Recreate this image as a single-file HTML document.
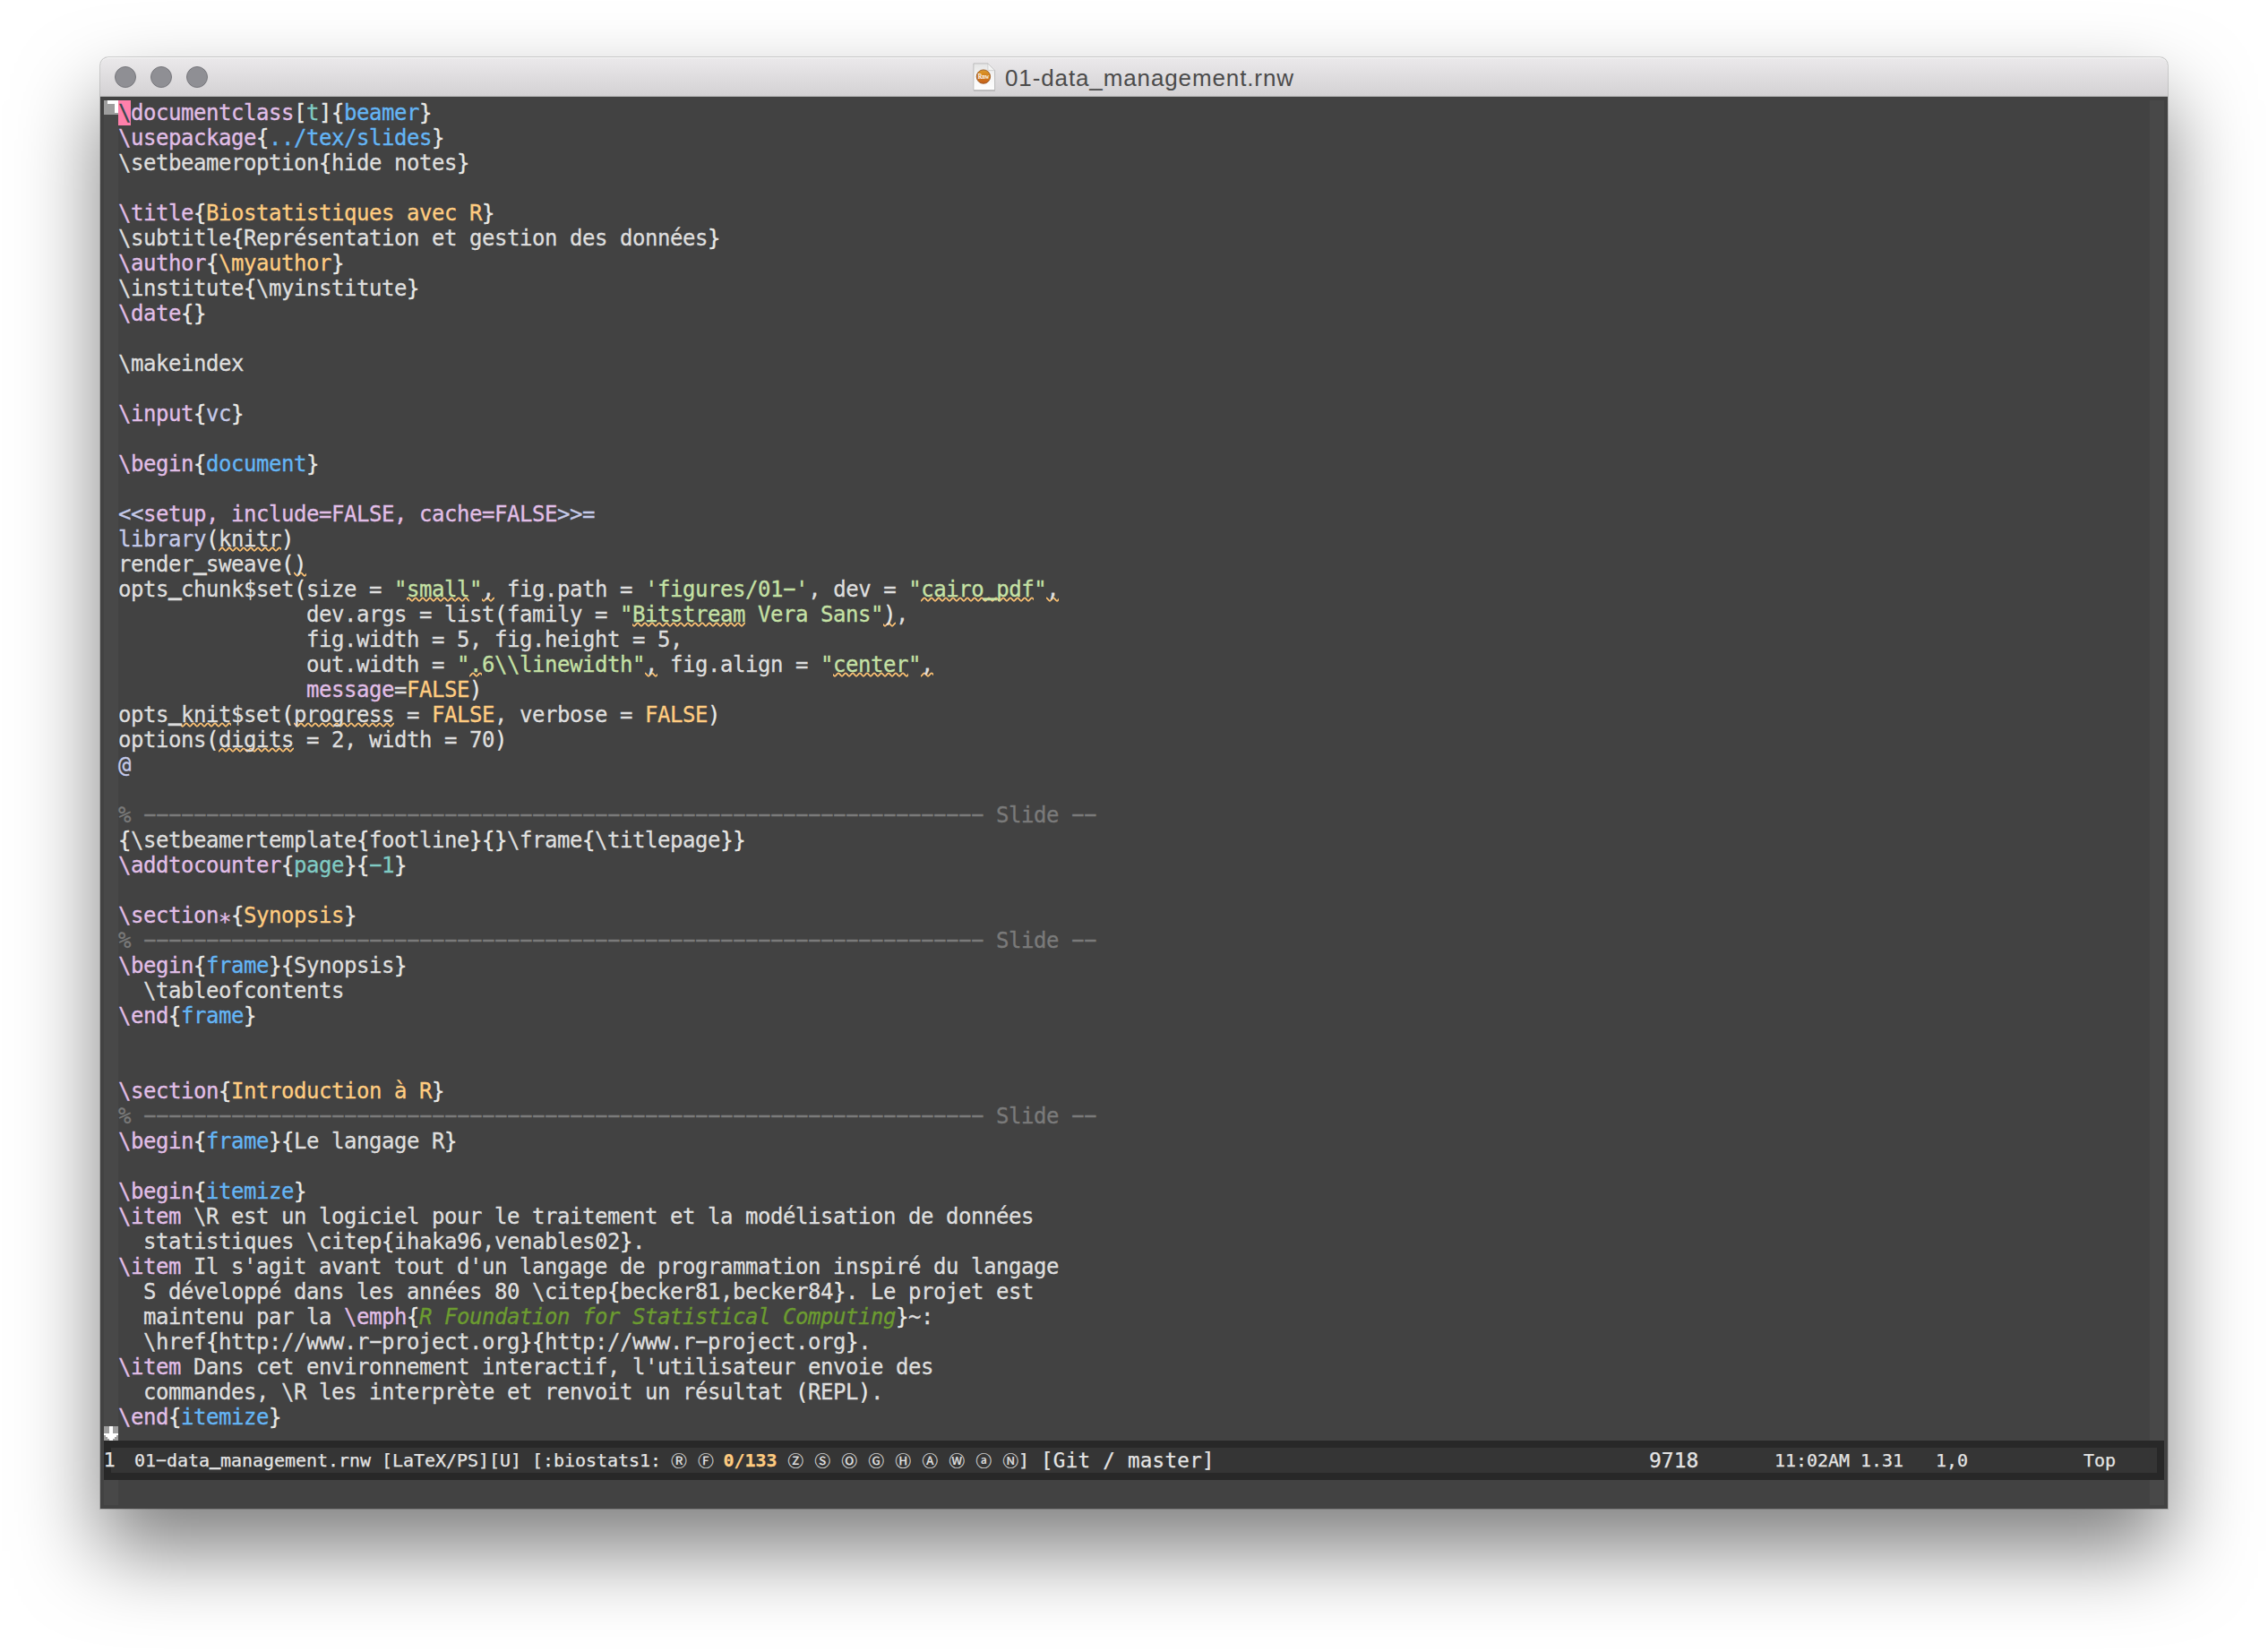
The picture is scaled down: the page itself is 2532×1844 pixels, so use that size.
<!DOCTYPE html>
<html lang="fr"><head><meta charset="utf-8"><title>01-data_management.rnw</title>
<style>
html,body{margin:0;padding:0}
body{width:2532px;height:1844px;background:#fff;position:relative;overflow:hidden;font-family:"DejaVu Sans Mono","Liberation Mono",monospace}
#win{position:absolute;left:112px;top:64px;width:2308px;height:1620px;border-radius:9px 9px 0 0;background:#424242;
 box-shadow:0 0 0 1px rgba(0,0,0,.16),0 47px 92px 0 rgba(0,0,0,.5)}
#tb{position:absolute;left:0;top:0;width:100%;height:44px;border-radius:9px 9px 0 0;
 background:linear-gradient(#ebe9eb,#d3d1d3);box-shadow:inset 0 1px 0 #f7f7f7, inset 0 -1px 0 #b9b9b9}
.tl{position:absolute;top:10px;width:22px;height:22px;border-radius:50%;background:#8f8f94;border:1px solid #77777c}
#title{position:absolute;left:1010px;top:8px;height:30px;font:26px/30px "Liberation Sans","DejaVu Sans",sans-serif;letter-spacing:0.88px;color:#4b4b4b;white-space:pre}
#ed{position:absolute;left:0;top:44px;width:2308px;height:1576px;background:#424242}
.fr{position:absolute;top:4px;width:16px;height:1568px;background:#484848}
#txt{position:absolute;left:20px;top:4px;width:2268px;font-size:24px;letter-spacing:-0.449px;color:#dedede;-webkit-text-stroke:0.3px}
.ln{height:28px;line-height:28px;white-space:pre}
.ln i{font-style:normal;display:inline-block;transform:scaleX(1.95);position:relative;top:-1px}
.k{color:#e1bee7}.d{color:#dedede}.b{color:#e9e9e6}.u{color:#64b5f6}.t{color:#80cbc4}.o{color:#ffcc80}
.s{color:#c5e1a5}.c{color:#7a7a7a}.l{color:#c5cae9}.e{color:#6c9c30;font-style:italic}
.cur{background:#ff80ab;color:#37474f}
#ml{position:absolute;left:4px;top:1500px;width:2300px;height:44px;background:#282828}
#mli{position:absolute;left:8px;top:8px;right:8px;height:28px;background:#353535}
.m{position:absolute;top:8px;height:28px;line-height:28px;font-size:20px;letter-spacing:-0.041px;color:#e4e4e4;white-space:pre;-webkit-text-stroke:0.25px}
.m i{font-style:normal;display:inline-block;transform:scaleX(1.95);position:relative;top:-1px}
.m.big{font-size:23px;letter-spacing:0}
.m.one{font-size:22px;letter-spacing:0}
.m.cc{font-family:"Noto Sans CJK JP","DejaVu Sans",sans-serif;font-size:17.5px;letter-spacing:0;width:30px;text-align:center;-webkit-text-stroke:0.2px}
.m b{color:#ffcc80}
.ln u,.m u{text-decoration:none;display:inline-block;position:relative;top:-1.9px;transform:scale(1.05,2.3);transform-origin:50% 27.2px}
.m u{top:-1.8px;transform-origin:50% 25.3px}
.ln em{font-style:normal;position:relative;top:7px}
.ln i,.ln u{width:14px}.m i,.m u{width:12px}
</style></head><body>
<div id="win">
<div id="tb"><div class="tl" style="left:16px"></div><div class="tl" style="left:56px"></div><div class="tl" style="left:96px"></div>
<svg id="ico" style="position:absolute;left:972px;top:4px" width="30" height="36" viewBox="0 0 30 36"><defs><linearGradient id="pg" x1="0" y1="0" x2="0" y2="1"><stop offset="0" stop-color="#e4e4e4"/><stop offset=".5" stop-color="#f6f6f6"/><stop offset="1" stop-color="#fefefe"/></linearGradient><linearGradient id="og" x1="0" y1="0" x2="0" y2="1"><stop offset="0" stop-color="#dc9a2e"/><stop offset=".5" stop-color="#d17c1a"/><stop offset="1" stop-color="#c65f1c"/></linearGradient></defs><path d="M3 3.5h16l8 8v21.5H3z" fill="#000" opacity=".12" transform="translate(0 1)"/><path d="M2.9 2.9h16l7.7 7.7v22H2.9z" fill="url(#pg)" stroke="#b3b3b3" stroke-width=".8"/><path d="M18.9 2.9v7.7h7.7z" fill="#f4f4f4" stroke="#bdbdbd" stroke-width=".6"/><circle cx="13.9" cy="17.6" r="7.7" fill="url(#og)" stroke="#8f4d16" stroke-width=".8"/><text x="14" y="20.1" font-family="Liberation Serif,serif" font-size="7.6" font-weight="bold" fill="#fff" text-anchor="middle" textLength="12.6" lengthAdjust="spacingAndGlyphs">Rnw</text></svg>
<div id="title">01-data_management.rnw</div></div>
<div id="ed">
<div class="fr" style="left:4px"></div><div class="fr" style="left:2288px"></div>
<svg style="position:absolute;left:-112px;top:-108px" width="2532" height="1844" viewBox="0 0 2532 1844"><g fill="none" stroke="#ffc373" stroke-width="1.8" stroke-linecap="round"><clipPath id="wc"><rect x="244" y="608.3" width="70" height="9"/><rect x="328" y="636.3" width="14" height="9"/><rect x="454" y="664.3" width="70" height="9"/><rect x="538" y="664.3" width="14" height="9"/><rect x="1028" y="664.3" width="126" height="9"/><rect x="1168" y="664.3" width="14" height="9"/><rect x="706" y="692.3" width="126" height="9"/><rect x="986" y="692.3" width="14" height="9"/><rect x="524" y="748.3" width="14" height="9"/><rect x="720" y="748.3" width="14" height="9"/><rect x="930" y="748.3" width="84" height="9"/><rect x="1028" y="748.3" width="14" height="9"/><rect x="202" y="804.3" width="56" height="9"/><rect x="328" y="804.3" width="112" height="9"/><rect x="244" y="832.3" width="84" height="9"/></clipPath><path clip-path="url(#wc)" d="M240 611.3C241.5 611.3 242.5 614.8 244 614.8C245.5 614.8 246.5 611.3 248 611.3C249.5 611.3 250.5 614.8 252 614.8C253.5 614.8 254.5 611.3 256 611.3C257.5 611.3 258.5 614.8 260 614.8C261.5 614.8 262.5 611.3 264 611.3C265.5 611.3 266.5 614.8 268 614.8C269.5 614.8 270.5 611.3 272 611.3C273.5 611.3 274.5 614.8 276 614.8C277.5 614.8 278.5 611.3 280 611.3C281.5 611.3 282.5 614.8 284 614.8C285.5 614.8 286.5 611.3 288 611.3C289.5 611.3 290.5 614.8 292 614.8C293.5 614.8 294.5 611.3 296 611.3C297.5 611.3 298.5 614.8 300 614.8C301.5 614.8 302.5 611.3 304 611.3C305.5 611.3 306.5 614.8 308 614.8C309.5 614.8 310.5 611.3 312 611.3C313.5 611.3 314.5 614.8 316 614.8 M328 639.3C329.5 639.3 330.5 642.8 332 642.8C333.5 642.8 334.5 639.3 336 639.3C337.5 639.3 338.5 642.8 340 642.8C341.5 642.8 342.5 639.3 344 639.3 M448 667.3C449.5 667.3 450.5 670.8 452 670.8C453.5 670.8 454.5 667.3 456 667.3C457.5 667.3 458.5 670.8 460 670.8C461.5 670.8 462.5 667.3 464 667.3C465.5 667.3 466.5 670.8 468 670.8C469.5 670.8 470.5 667.3 472 667.3C473.5 667.3 474.5 670.8 476 670.8C477.5 670.8 478.5 667.3 480 667.3C481.5 667.3 482.5 670.8 484 670.8C485.5 670.8 486.5 667.3 488 667.3C489.5 667.3 490.5 670.8 492 670.8C493.5 670.8 494.5 667.3 496 667.3C497.5 667.3 498.5 670.8 500 670.8C501.5 670.8 502.5 667.3 504 667.3C505.5 667.3 506.5 670.8 508 670.8C509.5 670.8 510.5 667.3 512 667.3C513.5 667.3 514.5 670.8 516 670.8C517.5 670.8 518.5 667.3 520 667.3C521.5 667.3 522.5 670.8 524 670.8 M536 667.3C537.5 667.3 538.5 670.8 540 670.8C541.5 670.8 542.5 667.3 544 667.3C545.5 667.3 546.5 670.8 548 670.8C549.5 670.8 550.5 667.3 552 667.3 M1024 667.3C1025.5 667.3 1026.5 670.8 1028 670.8C1029.5 670.8 1030.5 667.3 1032 667.3C1033.5 667.3 1034.5 670.8 1036 670.8C1037.5 670.8 1038.5 667.3 1040 667.3C1041.5 667.3 1042.5 670.8 1044 670.8C1045.5 670.8 1046.5 667.3 1048 667.3C1049.5 667.3 1050.5 670.8 1052 670.8C1053.5 670.8 1054.5 667.3 1056 667.3C1057.5 667.3 1058.5 670.8 1060 670.8C1061.5 670.8 1062.5 667.3 1064 667.3C1065.5 667.3 1066.5 670.8 1068 670.8C1069.5 670.8 1070.5 667.3 1072 667.3C1073.5 667.3 1074.5 670.8 1076 670.8C1077.5 670.8 1078.5 667.3 1080 667.3C1081.5 667.3 1082.5 670.8 1084 670.8C1085.5 670.8 1086.5 667.3 1088 667.3C1089.5 667.3 1090.5 670.8 1092 670.8C1093.5 670.8 1094.5 667.3 1096 667.3C1097.5 667.3 1098.5 670.8 1100 670.8C1101.5 670.8 1102.5 667.3 1104 667.3C1105.5 667.3 1106.5 670.8 1108 670.8C1109.5 670.8 1110.5 667.3 1112 667.3C1113.5 667.3 1114.5 670.8 1116 670.8C1117.5 670.8 1118.5 667.3 1120 667.3C1121.5 667.3 1122.5 670.8 1124 670.8C1125.5 670.8 1126.5 667.3 1128 667.3C1129.5 667.3 1130.5 670.8 1132 670.8C1133.5 670.8 1134.5 667.3 1136 667.3C1137.5 667.3 1138.5 670.8 1140 670.8C1141.5 670.8 1142.5 667.3 1144 667.3C1145.5 667.3 1146.5 670.8 1148 670.8C1149.5 670.8 1150.5 667.3 1152 667.3C1153.5 667.3 1154.5 670.8 1156 670.8 M1168 667.3C1169.5 667.3 1170.5 670.8 1172 670.8C1173.5 670.8 1174.5 667.3 1176 667.3C1177.5 667.3 1178.5 670.8 1180 670.8C1181.5 670.8 1182.5 667.3 1184 667.3 M704 695.3C705.5 695.3 706.5 698.8 708 698.8C709.5 698.8 710.5 695.3 712 695.3C713.5 695.3 714.5 698.8 716 698.8C717.5 698.8 718.5 695.3 720 695.3C721.5 695.3 722.5 698.8 724 698.8C725.5 698.8 726.5 695.3 728 695.3C729.5 695.3 730.5 698.8 732 698.8C733.5 698.8 734.5 695.3 736 695.3C737.5 695.3 738.5 698.8 740 698.8C741.5 698.8 742.5 695.3 744 695.3C745.5 695.3 746.5 698.8 748 698.8C749.5 698.8 750.5 695.3 752 695.3C753.5 695.3 754.5 698.8 756 698.8C757.5 698.8 758.5 695.3 760 695.3C761.5 695.3 762.5 698.8 764 698.8C765.5 698.8 766.5 695.3 768 695.3C769.5 695.3 770.5 698.8 772 698.8C773.5 698.8 774.5 695.3 776 695.3C777.5 695.3 778.5 698.8 780 698.8C781.5 698.8 782.5 695.3 784 695.3C785.5 695.3 786.5 698.8 788 698.8C789.5 698.8 790.5 695.3 792 695.3C793.5 695.3 794.5 698.8 796 698.8C797.5 698.8 798.5 695.3 800 695.3C801.5 695.3 802.5 698.8 804 698.8C805.5 698.8 806.5 695.3 808 695.3C809.5 695.3 810.5 698.8 812 698.8C813.5 698.8 814.5 695.3 816 695.3C817.5 695.3 818.5 698.8 820 698.8C821.5 698.8 822.5 695.3 824 695.3C825.5 695.3 826.5 698.8 828 698.8C829.5 698.8 830.5 695.3 832 695.3 M984 695.3C985.5 695.3 986.5 698.8 988 698.8C989.5 698.8 990.5 695.3 992 695.3C993.5 695.3 994.5 698.8 996 698.8C997.5 698.8 998.5 695.3 1000 695.3 M520 751.3C521.5 751.3 522.5 754.8 524 754.8C525.5 754.8 526.5 751.3 528 751.3C529.5 751.3 530.5 754.8 532 754.8C533.5 754.8 534.5 751.3 536 751.3C537.5 751.3 538.5 754.8 540 754.8 M720 751.3C721.5 751.3 722.5 754.8 724 754.8C725.5 754.8 726.5 751.3 728 751.3C729.5 751.3 730.5 754.8 732 754.8C733.5 754.8 734.5 751.3 736 751.3 M928 751.3C929.5 751.3 930.5 754.8 932 754.8C933.5 754.8 934.5 751.3 936 751.3C937.5 751.3 938.5 754.8 940 754.8C941.5 754.8 942.5 751.3 944 751.3C945.5 751.3 946.5 754.8 948 754.8C949.5 754.8 950.5 751.3 952 751.3C953.5 751.3 954.5 754.8 956 754.8C957.5 754.8 958.5 751.3 960 751.3C961.5 751.3 962.5 754.8 964 754.8C965.5 754.8 966.5 751.3 968 751.3C969.5 751.3 970.5 754.8 972 754.8C973.5 754.8 974.5 751.3 976 751.3C977.5 751.3 978.5 754.8 980 754.8C981.5 754.8 982.5 751.3 984 751.3C985.5 751.3 986.5 754.8 988 754.8C989.5 754.8 990.5 751.3 992 751.3C993.5 751.3 994.5 754.8 996 754.8C997.5 754.8 998.5 751.3 1000 751.3C1001.5 751.3 1002.5 754.8 1004 754.8C1005.5 754.8 1006.5 751.3 1008 751.3C1009.5 751.3 1010.5 754.8 1012 754.8C1013.5 754.8 1014.5 751.3 1016 751.3 M1024 751.3C1025.5 751.3 1026.5 754.8 1028 754.8C1029.5 754.8 1030.5 751.3 1032 751.3C1033.5 751.3 1034.5 754.8 1036 754.8C1037.5 754.8 1038.5 751.3 1040 751.3C1041.5 751.3 1042.5 754.8 1044 754.8 M200 807.3C201.5 807.3 202.5 810.8 204 810.8C205.5 810.8 206.5 807.3 208 807.3C209.5 807.3 210.5 810.8 212 810.8C213.5 810.8 214.5 807.3 216 807.3C217.5 807.3 218.5 810.8 220 810.8C221.5 810.8 222.5 807.3 224 807.3C225.5 807.3 226.5 810.8 228 810.8C229.5 810.8 230.5 807.3 232 807.3C233.5 807.3 234.5 810.8 236 810.8C237.5 810.8 238.5 807.3 240 807.3C241.5 807.3 242.5 810.8 244 810.8C245.5 810.8 246.5 807.3 248 807.3C249.5 807.3 250.5 810.8 252 810.8C253.5 810.8 254.5 807.3 256 807.3C257.5 807.3 258.5 810.8 260 810.8 M328 807.3C329.5 807.3 330.5 810.8 332 810.8C333.5 810.8 334.5 807.3 336 807.3C337.5 807.3 338.5 810.8 340 810.8C341.5 810.8 342.5 807.3 344 807.3C345.5 807.3 346.5 810.8 348 810.8C349.5 810.8 350.5 807.3 352 807.3C353.5 807.3 354.5 810.8 356 810.8C357.5 810.8 358.5 807.3 360 807.3C361.5 807.3 362.5 810.8 364 810.8C365.5 810.8 366.5 807.3 368 807.3C369.5 807.3 370.5 810.8 372 810.8C373.5 810.8 374.5 807.3 376 807.3C377.5 807.3 378.5 810.8 380 810.8C381.5 810.8 382.5 807.3 384 807.3C385.5 807.3 386.5 810.8 388 810.8C389.5 810.8 390.5 807.3 392 807.3C393.5 807.3 394.5 810.8 396 810.8C397.5 810.8 398.5 807.3 400 807.3C401.5 807.3 402.5 810.8 404 810.8C405.5 810.8 406.5 807.3 408 807.3C409.5 807.3 410.5 810.8 412 810.8C413.5 810.8 414.5 807.3 416 807.3C417.5 807.3 418.5 810.8 420 810.8C421.5 810.8 422.5 807.3 424 807.3C425.5 807.3 426.5 810.8 428 810.8C429.5 810.8 430.5 807.3 432 807.3C433.5 807.3 434.5 810.8 436 810.8C437.5 810.8 438.5 807.3 440 807.3 M240 835.3C241.5 835.3 242.5 838.8 244 838.8C245.5 838.8 246.5 835.3 248 835.3C249.5 835.3 250.5 838.8 252 838.8C253.5 838.8 254.5 835.3 256 835.3C257.5 835.3 258.5 838.8 260 838.8C261.5 838.8 262.5 835.3 264 835.3C265.5 835.3 266.5 838.8 268 838.8C269.5 838.8 270.5 835.3 272 835.3C273.5 835.3 274.5 838.8 276 838.8C277.5 838.8 278.5 835.3 280 835.3C281.5 835.3 282.5 838.8 284 838.8C285.5 838.8 286.5 835.3 288 835.3C289.5 835.3 290.5 838.8 292 838.8C293.5 838.8 294.5 835.3 296 835.3C297.5 835.3 298.5 838.8 300 838.8C301.5 838.8 302.5 835.3 304 835.3C305.5 835.3 306.5 838.8 308 838.8C309.5 838.8 310.5 835.3 312 835.3C313.5 835.3 314.5 838.8 316 838.8C317.5 838.8 318.5 835.3 320 835.3C321.5 835.3 322.5 838.8 324 838.8C325.5 838.8 326.5 835.3 328 835.3"/></g></svg>
<div id="txt">
<div class="ln"><span class="cur">\</span><span class="k">documentclass</span><span class="b">[</span><span class="t">t</span><span class="b">]{</span><span class="u">beamer</span><span class="b">}</span></div>
<div class="ln"><span class="k">\usepackage</span><span class="b">{</span><span class="u">../tex/slides</span><span class="b">}</span></div>
<div class="ln"><span class="d">\setbeameroption</span><span class="b">{</span><span class="d">hide notes</span><span class="b">}</span></div>
<div class="ln"></div>
<div class="ln"><span class="k">\title</span><span class="b">{</span><span class="o">Biostatistiques avec R</span><span class="b">}</span></div>
<div class="ln"><span class="d">\subtitle</span><span class="b">{</span><span class="d">Représentation et gestion des données</span><span class="b">}</span></div>
<div class="ln"><span class="k">\author</span><span class="b">{</span><span class="o">\myauthor</span><span class="b">}</span></div>
<div class="ln"><span class="d">\institute</span><span class="b">{</span><span class="d">\myinstitute</span><span class="b">}</span></div>
<div class="ln"><span class="k">\date</span><span class="b">{}</span></div>
<div class="ln"></div>
<div class="ln"><span class="d">\makeindex</span></div>
<div class="ln"></div>
<div class="ln"><span class="k">\input</span><span class="b">{</span><span class="l">vc</span><span class="b">}</span></div>
<div class="ln"></div>
<div class="ln"><span class="k">\begin</span><span class="b">{</span><span class="u">document</span><span class="b">}</span></div>
<div class="ln"></div>
<div class="ln"><span class="l">&lt;&lt;</span><span class="k">setup, include=FALSE, cache=FALSE</span><span class="l">&gt;&gt;=</span></div>
<div class="ln"><span class="l">library</span><span class="b">(</span><span class="d">knitr</span><span class="b">)</span></div>
<div class="ln"><span class="d">render<u>_</u>sweave</span><span class="b">()</span></div>
<div class="ln"><span class="d">opts<u>_</u>chunk$set</span><span class="b">(</span><span class="d">size = </span><span class="s">"small"</span><span class="d">, fig.path = </span><span class="s">'figures/01<i>-</i>'</span><span class="d">, dev = </span><span class="s">"cairo<u>_</u>pdf"</span><span class="d">,</span></div>
<div class="ln"><span class="d">               dev.args = list</span><span class="b">(</span><span class="d">family = </span><span class="s">"Bitstream Vera Sans"</span><span class="b">)</span><span class="d">,</span></div>
<div class="ln"><span class="d">               fig.width = 5, fig.height = 5,</span></div>
<div class="ln"><span class="d">               out.width = </span><span class="s">".6\\linewidth"</span><span class="d">, fig.align = </span><span class="s">"center"</span><span class="d">,</span></div>
<div class="ln"><span class="d">               </span><span class="k">message</span><span class="d">=</span><span class="o">FALSE</span><span class="b">)</span></div>
<div class="ln"><span class="d">opts<u>_</u>knit$set</span><span class="b">(</span><span class="d">progress = </span><span class="o">FALSE</span><span class="d">, verbose = </span><span class="o">FALSE</span><span class="b">)</span></div>
<div class="ln"><span class="d">options</span><span class="b">(</span><span class="d">digits = 2, width = 70</span><span class="b">)</span></div>
<div class="ln"><span class="l">@</span></div>
<div class="ln"></div>
<div class="ln"><span class="c">% <i>-</i><i>-</i><i>-</i><i>-</i><i>-</i><i>-</i><i>-</i><i>-</i><i>-</i><i>-</i><i>-</i><i>-</i><i>-</i><i>-</i><i>-</i><i>-</i><i>-</i><i>-</i><i>-</i><i>-</i><i>-</i><i>-</i><i>-</i><i>-</i><i>-</i><i>-</i><i>-</i><i>-</i><i>-</i><i>-</i><i>-</i><i>-</i><i>-</i><i>-</i><i>-</i><i>-</i><i>-</i><i>-</i><i>-</i><i>-</i><i>-</i><i>-</i><i>-</i><i>-</i><i>-</i><i>-</i><i>-</i><i>-</i><i>-</i><i>-</i><i>-</i><i>-</i><i>-</i><i>-</i><i>-</i><i>-</i><i>-</i><i>-</i><i>-</i><i>-</i><i>-</i><i>-</i><i>-</i><i>-</i><i>-</i><i>-</i><i>-</i> Slide <i>-</i><i>-</i></span></div>
<div class="ln"><span class="b">{</span><span class="d">\setbeamertemplate</span><span class="b">{</span><span class="d">footline</span><span class="b">}{}</span><span class="d">\frame</span><span class="b">{</span><span class="d">\titlepage</span><span class="b">}}</span></div>
<div class="ln"><span class="k">\addtocounter</span><span class="b">{</span><span class="t">page</span><span class="b">}{</span><span class="t"><i>-</i>1</span><span class="b">}</span></div>
<div class="ln"></div>
<div class="ln"><span class="k">\section<em>*</em></span><span class="b">{</span><span class="o">Synopsis</span><span class="b">}</span></div>
<div class="ln"><span class="c">% <i>-</i><i>-</i><i>-</i><i>-</i><i>-</i><i>-</i><i>-</i><i>-</i><i>-</i><i>-</i><i>-</i><i>-</i><i>-</i><i>-</i><i>-</i><i>-</i><i>-</i><i>-</i><i>-</i><i>-</i><i>-</i><i>-</i><i>-</i><i>-</i><i>-</i><i>-</i><i>-</i><i>-</i><i>-</i><i>-</i><i>-</i><i>-</i><i>-</i><i>-</i><i>-</i><i>-</i><i>-</i><i>-</i><i>-</i><i>-</i><i>-</i><i>-</i><i>-</i><i>-</i><i>-</i><i>-</i><i>-</i><i>-</i><i>-</i><i>-</i><i>-</i><i>-</i><i>-</i><i>-</i><i>-</i><i>-</i><i>-</i><i>-</i><i>-</i><i>-</i><i>-</i><i>-</i><i>-</i><i>-</i><i>-</i><i>-</i><i>-</i> Slide <i>-</i><i>-</i></span></div>
<div class="ln"><span class="k">\begin</span><span class="b">{</span><span class="u">frame</span><span class="b">}{</span><span class="d">Synopsis</span><span class="b">}</span></div>
<div class="ln"><span class="d">  \tableofcontents</span></div>
<div class="ln"><span class="k">\end</span><span class="b">{</span><span class="u">frame</span><span class="b">}</span></div>
<div class="ln"></div>
<div class="ln"></div>
<div class="ln"><span class="k">\section</span><span class="b">{</span><span class="o">Introduction à R</span><span class="b">}</span></div>
<div class="ln"><span class="c">% <i>-</i><i>-</i><i>-</i><i>-</i><i>-</i><i>-</i><i>-</i><i>-</i><i>-</i><i>-</i><i>-</i><i>-</i><i>-</i><i>-</i><i>-</i><i>-</i><i>-</i><i>-</i><i>-</i><i>-</i><i>-</i><i>-</i><i>-</i><i>-</i><i>-</i><i>-</i><i>-</i><i>-</i><i>-</i><i>-</i><i>-</i><i>-</i><i>-</i><i>-</i><i>-</i><i>-</i><i>-</i><i>-</i><i>-</i><i>-</i><i>-</i><i>-</i><i>-</i><i>-</i><i>-</i><i>-</i><i>-</i><i>-</i><i>-</i><i>-</i><i>-</i><i>-</i><i>-</i><i>-</i><i>-</i><i>-</i><i>-</i><i>-</i><i>-</i><i>-</i><i>-</i><i>-</i><i>-</i><i>-</i><i>-</i><i>-</i><i>-</i> Slide <i>-</i><i>-</i></span></div>
<div class="ln"><span class="k">\begin</span><span class="b">{</span><span class="u">frame</span><span class="b">}{</span><span class="d">Le langage R</span><span class="b">}</span></div>
<div class="ln"></div>
<div class="ln"><span class="k">\begin</span><span class="b">{</span><span class="u">itemize</span><span class="b">}</span></div>
<div class="ln"><span class="k">\item</span><span class="d"> \R est un logiciel pour le traitement et la modélisation de données</span></div>
<div class="ln"><span class="d">  statistiques \citep</span><span class="b">{</span><span class="d">ihaka96,venables02</span><span class="b">}</span><span class="d">.</span></div>
<div class="ln"><span class="k">\item</span><span class="d"> Il s'agit avant tout d'un langage de programmation inspiré du langage</span></div>
<div class="ln"><span class="d">  S développé dans les années 80 \citep</span><span class="b">{</span><span class="d">becker81,becker84</span><span class="b">}</span><span class="d">. Le projet est</span></div>
<div class="ln"><span class="d">  maintenu par la </span><span class="k">\emph</span><span class="b">{</span><span class="e">R Foundation for Statistical Computing</span><span class="b">}</span><span class="d">~:</span></div>
<div class="ln"><span class="d">  \href</span><span class="b">{</span><span class="d">http://www.r<i>-</i>project.org</span><span class="b">}{</span><span class="d">http://www.r<i>-</i>project.org</span><span class="b">}</span><span class="d">.</span></div>
<div class="ln"><span class="k">\item</span><span class="d"> Dans cet environnement interactif, l'utilisateur envoie des</span></div>
<div class="ln"><span class="d">  commandes, \R les interprète et renvoit un résultat </span><span class="b">(</span><span class="d">REPL</span><span class="b">)</span><span class="d">.</span></div>
<div class="ln"><span class="k">\end</span><span class="b">{</span><span class="u">itemize</span><span class="b">}</span></div>
</div>
<div id="ml"><div id="mli"></div>
<span class="m one" style="left:-0.5px">1</span>
<span class="m" style="left:34px">01<i>-</i>data<u>_</u>management.rnw [LaTeX/PS][U] [:biostats1:</span>
<span class="m cc" style="left:627.1px">Ⓡ</span>
<span class="m cc" style="left:657.1px">Ⓕ</span>
<span class="m cc" style="left:757.3px">Ⓩ</span>
<span class="m cc" style="left:787.3px">Ⓢ</span>
<span class="m cc" style="left:817.3px">Ⓞ</span>
<span class="m cc" style="left:847.3px">Ⓖ</span>
<span class="m cc" style="left:877.3px">Ⓗ</span>
<span class="m cc" style="left:907.3px">Ⓐ</span>
<span class="m cc" style="left:937.3px">Ⓦ</span>
<span class="m cc" style="left:967.3px">ⓐ</span>
<span class="m cc" style="left:997.3px">Ⓝ</span>
<span class="m" style="left:691.5px"><b>0/133</b></span>
<span class="m" style="left:1021.0px">]</span>
<span class="m big" style="left:1046px;font-size:22.5px;letter-spacing:.3px">[Git / master]</span>
<span class="m big" style="left:1725px">9718</span>
<span class="m" style="left:1865px">11:02AM 1.31   1,0</span>
<span class="m" style="left:2210px">Top</span>
</div>
</div>
</div>
<svg style="position:absolute;left:0;top:0;pointer-events:none" width="2532" height="1844" viewBox="0 0 2532 1844">
<g id="fringe"><rect x="116" y="112" width="16" height="16" fill="#9e9e9e"/><path d="M120 112h12v14h-4v-10h-8z" fill="#fff"/>
<rect x="116" y="1592" width="16" height="16" fill="#9e9e9e"/><path d="M122 1592h4v8h6v2h-2v2h-2v2h-2v2h-4v-2h-2v-2h-2v-2h-2v-2h6z" fill="#fff"/></g>

</svg>
</body></html>
